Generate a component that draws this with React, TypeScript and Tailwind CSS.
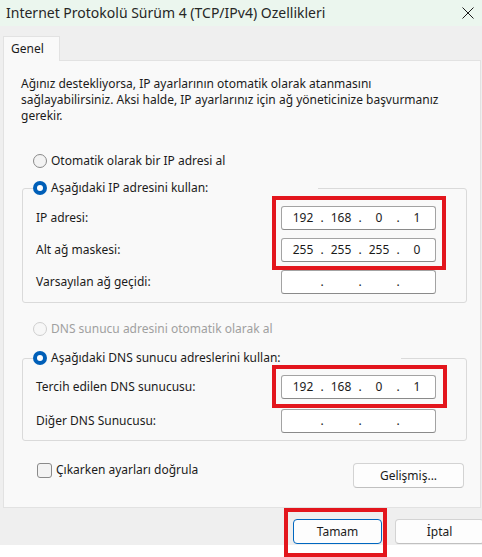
import React from "react";

const font = { fontFamily: '"Noto Sans", "Open Sans", sans-serif' };

const Radio = ({ checked, disabled }: { checked?: boolean; disabled?: boolean }) => {
  if (checked) {
    return (
      <span className="flex h-[14px] w-[14px] shrink-0 items-center justify-center rounded-full bg-[#005fb8]">
        <span className="h-[6px] w-[6px] rounded-full bg-white" />
      </span>
    );
  }
  return (
    <span
      className={
        disabled
          ? "h-[14px] w-[14px] shrink-0 rounded-full border border-[#cfcfcf] bg-[#f7f7f7]"
          : "h-[14px] w-[14px] shrink-0 rounded-full border border-[#8a8a8a] bg-[#f3f3f3]"
      }
    />
  );
};

const IpBox = ({ parts }: { parts?: string[] }) => {
  const p = parts ?? ["", "", "", ""];
  return (
    <div className="flex h-[24px] w-[155px] items-center rounded-[3px] border border-[#a3a3a3] border-b-[#8a8a8a] bg-white pl-[5px] text-[12px] text-[#1b1b1b]">
      {p.map((v, i) => (
        <React.Fragment key={i}>
          <span className="w-[32px] text-center">{v}</span>
          {i < 3 && <span className="w-[6px] text-center">.</span>}
        </React.Fragment>
      ))}
    </div>
  );
};

const Row = ({ label, children }: { label: string; children: React.ReactNode }) => (
  <div className="flex h-[24px] items-center justify-between">
    <span>{label}</span>
    {children}
  </div>
);

const RedBox = ({ className }: { className: string }) => (
  <div className={"pointer-events-none absolute border-[4px] border-[#e3161d] " + className} />
);

export default function App() {
  return (
    <div className="h-[557px] w-[482px] overflow-hidden bg-white text-[12px] leading-[16px] text-[#1b1b1b]" style={font}>
      {/* title bar */}
      <div className="flex h-[26px] items-center justify-between bg-[#ebf6ee] pl-[6px] pr-[4px]">
        <span className="text-[14px] leading-[18px] text-[#262626]">
          Internet Protokolü Sürüm 4 (TCP/IPv4) Ozellikleri
        </span>
        <svg width="14" height="14" viewBox="0 0 14 14" className="mr-[3px]">
          <path d="M1.5 1.5 L12.5 12.5 M12.5 1.5 L1.5 12.5" stroke="#1a1a1a" strokeWidth="1" />
        </svg>
      </div>

      <div className="h-[519px] bg-[#efefef] pt-[10px]">
        {/* tab */}
        <div className="relative z-10 ml-[3px] flex h-[25px] w-[57px] items-center border border-b-0 border-[#e2e2e2] bg-[#f9f9f9] pl-[7px]">
          Genel
        </div>

        {/* panel */}
        <div className="-mt-[1px] ml-[3px] mr-[1px] h-[448px] border border-[#e2e2e2] bg-[#f9f9f9] pl-[17px] pr-[13px] pt-[15px]">
          <p>
            Ağınız destekliyorsa, IP ayarlarının otomatik olarak atanmasını
            <br />
            sağlayabilirsiniz. Aksi halde, IP ayarlarınız için ağ yöneticinize başvurmanız
            <br />
            gerekir.
          </p>

          <div className="ml-[12px] mt-[27px] flex h-[20px] items-center gap-[4px]">
            <Radio />
            <span>Otomatik olarak bir IP adresi al</span>
          </div>

          <fieldset className="ml-[1px] mt-[7px] rounded-[3px] border border-[#dadada] pb-[8px] pl-[13px] pr-[30px]">
            <legend className="-ml-[3px] flex h-[20px] w-[285px] items-center gap-[4px]">
              <Radio checked />
              <span>Aşağıdaki IP adresini kullan:</span>
            </legend>
            <div className="relative mt-[8px] flex flex-col gap-[8px]">
              <RedBox className="left-[236px] top-[-10px] h-[74px] w-[174px]" />
              <Row label="IP adresi:">
                <IpBox parts={["192", "168", "0", "1"]} />
              </Row>
              <Row label="Alt ağ maskesi:">
                <IpBox parts={["255", "255", "255", "0"]} />
              </Row>
              <Row label="Varsayılan ağ geçidi:">
                <IpBox />
              </Row>
            </div>
          </fieldset>

          <div className="ml-[12px] mt-[16px] flex h-[20px] items-center gap-[4px] text-[#a0a0a0]">
            <Radio disabled />
            <span>DNS sunucu adresini otomatik olarak al</span>
          </div>

          <fieldset className="ml-[1px] mt-[9px] rounded-[3px] border border-[#dadada] pb-[7px] pl-[13px] pr-[30px]">
            <legend className="-ml-[3px] flex h-[20px] w-[368px] items-center gap-[4px]">
              <Radio checked />
              <span>Aşağıdaki DNS sunucu adreslerini kullan:</span>
            </legend>
            <div className="relative mt-[7px] flex flex-col gap-[10px]">
              <RedBox className="left-[236px] top-[-10px] h-[43px] w-[175px]" />
              <Row label="Tercih edilen DNS sunucusu:">
                <IpBox parts={["192", "168", "0", "1"]} />
              </Row>
              <Row label="Diğer DNS Sunucusu:">
                <IpBox />
              </Row>
            </div>
          </fieldset>

          <div className="mt-[22px] flex items-start justify-between pr-[3px]">
            <div className="ml-[16px] mt-[-1px] flex items-center gap-[4px]">
              <span className="h-[15px] w-[15px] rounded-[3px] border border-[#8a8a8a] bg-[#f3f3f3]" />
              <span>Çıkarken ayarları doğrula</span>
            </div>
            <button className="h-[25px] w-[111px] rounded-[4px] border border-[#d3d3d3] border-b-[#c0c0c0] bg-[#fdfdfd] text-[12px]">
              Gelişmiş...
            </button>
          </div>
        </div>

        {/* bottom buttons */}
        <div className="mt-[11px] flex justify-end gap-[13px]">
          <div className="relative">
            <RedBox className="left-[-9px] top-[-11px] h-[49px] w-[103px]" />
            <button className="h-[25px] w-[89px] rounded-[4px] border border-[#0067c0] bg-[#fdfdfd] text-[12px]">
              Tamam
            </button>
          </div>
          <button className="-mr-[2px] h-[25px] w-[89px] rounded-[4px] border border-[#d3d3d3] border-b-[#c0c0c0] bg-[#fdfdfd] text-[12px]">
            İptal
          </button>
        </div>
      </div>
    </div>
  );
}
